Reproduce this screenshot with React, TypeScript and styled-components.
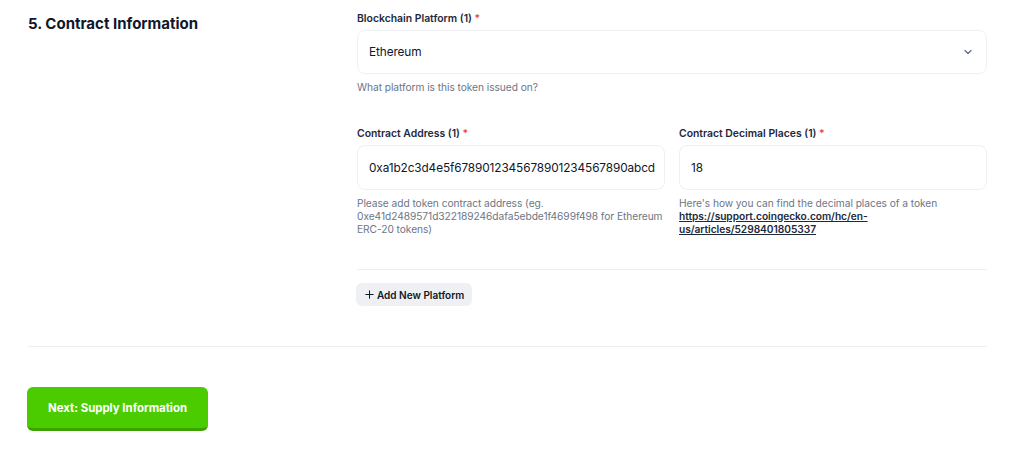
import React from 'react';
import styled, { createGlobalStyle } from 'styled-components';

const GlobalStyle = createGlobalStyle`
  * { box-sizing: border-box; }
  body {
    margin: 0;
    background: #ffffff;
    font-family: Inter, "Noto Sans", "Liberation Sans", sans-serif;
    color: #0f172a;
  }
`;

const Page = styled.div`
  padding: 12px 35px 0 28px;
`;

const Section = styled.section`
  display: grid;
  grid-template-columns: 329px 1fr;
  padding-bottom: 40px;
  border-bottom: 1px solid #eceef1;
`;

const Heading = styled.h2`
  margin: 3px 0 0;
  font-size: 15px;
  line-height: 18px;
  font-weight: 700;
  color: #0f172a;
`;

const Fields = styled.div`
  display: flex;
  flex-direction: column;
`;

const Field = styled.div`
  display: flex;
  flex-direction: column;
  min-width: 0;
`;

const Row = styled.div`
  display: grid;
  grid-template-columns: 1fr 1fr;
  gap: 14px;
  margin-top: 33px;
`;

const Label = styled.label`
  font-size: 10.4px;
  line-height: 14px;
  font-weight: 600;
  color: #1e293b;
  margin-bottom: 4px;

  span {
    color: #ef4444;
  }
`;

const Box = styled.div<{ $height: number }>`
  display: flex;
  align-items: center;
  justify-content: space-between;
  height: ${(p) => p.$height}px;
  padding: 0 12px 0 11px;
  border: 1.5px solid #eef0f3;
  border-radius: 8px;
  font-size: 11.8px;
  letter-spacing: -0.1px;
  color: #0f172a;
  white-space: nowrap;
  overflow: hidden;
`;

const Help = styled.p`
  margin: 7px 0 0;
  font-size: 10.2px;
  line-height: 13px;
  letter-spacing: -0.05px;
  color: #6b7686;

  a {
    color: #1e293b;
    font-weight: 600;
    text-decoration: underline;
  }
`;

const Divider = styled.hr`
  border: 0;
  border-top: 1px solid #eceef1;
  margin: 33px 0 13px;
  width: 100%;
`;

const AddButton = styled.button`
  align-self: flex-start;
  display: inline-flex;
  align-items: center;
  gap: 2px;
  height: 23px;
  margin-left: -1px;
  padding: 0 8px 0 8px;
  border: 0;
  border-radius: 6px;
  background: #eef0f3;
  font-family: inherit;
  font-size: 10px;
  font-weight: 600;
  color: #0f172a;
`;

const Footer = styled.div`
  padding-top: 40px;
`;

const NextButton = styled.button`
  width: 181px;
  height: 44px;
  margin-left: -1px;
  border: 0;
  border-bottom: 3px solid #3ba300;
  border-radius: 6px;
  background: #4bcc00;
  color: #ffffff;
  font-family: inherit;
  font-size: 11.4px;
  font-weight: 700;
`;

const Chevron = () => (
  <svg width="12" height="12" viewBox="0 0 24 24" fill="none" stroke="#5b6b82" strokeWidth="2.4" strokeLinecap="round" strokeLinejoin="round">
    <path d="M6 9l6 6 6-6" />
  </svg>
);

const Plus = () => (
  <svg width="11" height="11" viewBox="0 0 24 24" fill="none" stroke="#0f172a" strokeWidth="2.2" strokeLinecap="round">
    <path d="M12 4v16M4 12h16" />
  </svg>
);

export default function App() {
  return (
    <>
      <GlobalStyle />
      <Page>
        <Section>
          <Heading>5. Contract Information</Heading>
          <Fields>
            <Field>
              <Label>Blockchain Platform (1) <span>*</span></Label>
              <Box $height={44}>
                Ethereum
                <Chevron />
              </Box>
              <Help>What platform is this token issued on?</Help>
            </Field>

            <Row>
              <Field>
                <Label>Contract Address (1) <span>*</span></Label>
                <Box $height={45}>0xa1b2c3d4e5f6789012345678901234567890abcd</Box>
                <Help>
                  Please add token contract address (eg. 0xe41d2489571d322189246dafa5ebde1f4699f498 for Ethereum ERC-20 tokens)
                </Help>
              </Field>
              <Field>
                <Label>Contract Decimal Places (1) <span>*</span></Label>
                <Box $height={45}>18</Box>
                <Help>
                  Here's how you can find the decimal places of a token{' '}
                  <a href="#">https://support.coingecko.com/hc/en-us/articles/5298401805337</a>
                </Help>
              </Field>
            </Row>

            <Divider />
            <AddButton>
              <Plus />
              Add New Platform
            </AddButton>
          </Fields>
        </Section>
        <Footer>
          <NextButton>Next: Supply Information</NextButton>
        </Footer>
      </Page>
    </>
  );
}
